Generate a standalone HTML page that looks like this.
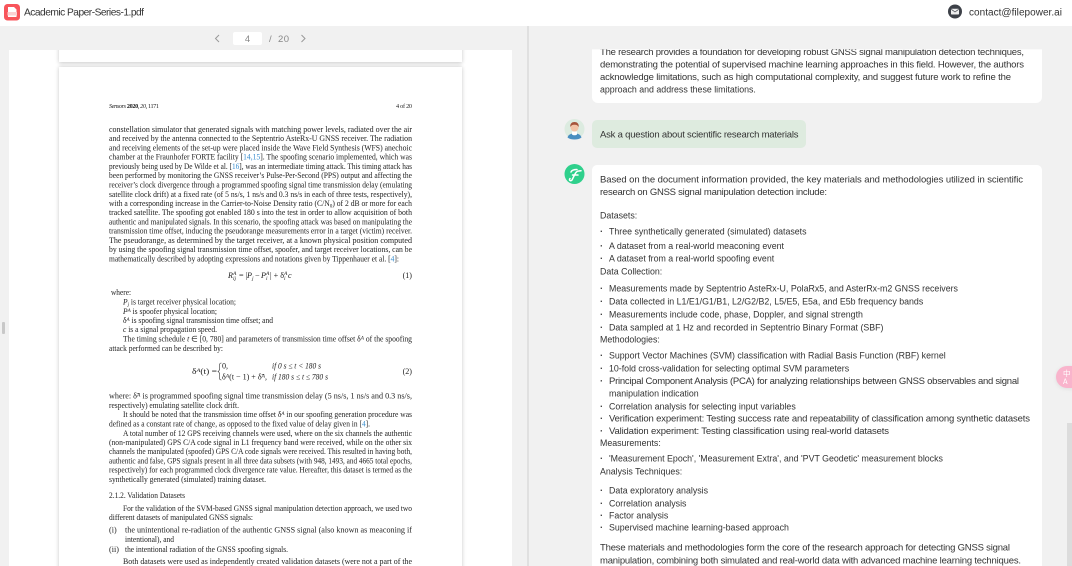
<!DOCTYPE html>
<html><head><meta charset="utf-8"><style>
html,body{margin:0;padding:0;width:1072px;height:566px;overflow:hidden;background:#f1f1f1}
#w{position:relative;width:1072px;height:566px;overflow:hidden;background:#f1f1f1}
.b{position:absolute}
svg{position:absolute;left:0;top:0}
.p text{font-family:"Liberation Serif",serif;font-size:8.100px;fill:#222}
.p .l{fill:#3a8fd0}
.p .i{font-style:italic}
.p .s{font-size:5.500px}
.c text{font-family:"Liberation Sans",sans-serif;font-size:9.500px;fill:#333}
.c .d{font-weight:bold;fill:#444}
</style></head><body><div id="w">
<div class="b" style="left:0;top:0;width:1072px;height:26px;background:#fff"></div>
<div class="b" style="left:9px;top:50px;width:503px;height:516px;background:#fff;overflow:hidden">
<div class="b" style="left:50px;top:-20px;width:403px;height:32px;background:#fff;box-shadow:0 1px 4px rgba(0,0,0,.22)"></div>
<div class="b" style="left:50px;top:17px;width:403px;height:520px;background:#fff;box-shadow:0 0 4px rgba(0,0,0,.22)"></div>
</div>
<div class="b" style="left:527px;top:26px;width:2px;height:540px;background:#e0e0e0"></div>
<div class="b" style="left:2px;top:322px;width:3px;height:12px;background:#c8c8c8;border-radius:1px"></div>
<div class="b" style="left:233px;top:32px;width:29px;height:13px;background:#fff;border-radius:2px"></div>
<div class="b" style="left:592px;top:49px;width:450px;height:54px;background:#fff;border-radius:0 0 6px 6px"></div>
<div class="b" style="left:592px;top:120px;width:214px;height:28px;background:#deebdf;border-radius:5px"></div>
<div class="b" style="left:592px;top:165px;width:450px;height:410px;background:#fff;border-radius:5px"></div>
<div class="b" style="left:1067px;top:423px;width:5px;height:143px;background:#dcdcdc"></div>
<div class="b" style="left:1056px;top:366px;width:30px;height:22px;background:#f9b4cc;border-radius:11px;box-shadow:0 1px 4px rgba(0,0,0,.08)"></div>

<svg width="1072" height="566" viewBox="0 0 1072 566">
<!-- PDF icon -->
<rect x="4" y="4" width="16" height="16.500" rx="3.500" fill="#f8555b"/>
<path d="M8 7h6l2.500 2.500V12H8z" fill="#fff"/><rect x="7.500" y="12" width="9.500" height="3.500" fill="#fbd0d2"/><path d="M8 15.500h8.500V17H8z" fill="#fff"/>
<text x="24" y="15.700" font-family="Liberation Sans,sans-serif" font-size="10.200" fill="#333" textLength="120">Academic Paper-Series-1.pdf</text>
<!-- mail -->
<circle cx="955" cy="11.500" r="7" fill="#3d4148"/>
<rect x="951" y="8.700" width="8" height="5.800" rx=".8" fill="#eee"/><path d="M951.300 9.300l3.700 2.700 3.700-2.700" fill="none" stroke="#3d4148" stroke-width=".7"/>
<text x="969" y="15.500" font-family="Liberation Sans,sans-serif" font-size="10" fill="#333" textLength="93">contact@filepower.ai</text>
<!-- pager -->
<path d="M219 35l-3.500 3.500 3.500 3.500" fill="none" stroke="#999" stroke-width="1"/>
<path d="M301.500 35l3.500 3.500-3.500 3.500" fill="none" stroke="#999" stroke-width="1"/>
<g font-family="Liberation Sans,sans-serif" font-size="9.500" fill="#888">
<text x="247.500" y="42" text-anchor="middle">4</text>
<text x="269" y="42">/</text>
<text x="278" y="42" textLength="11">20</text>
</g>
<!-- avatars -->
<circle cx="574.500" cy="129" r="10" fill="#dcebe0"/>
<path d="M567.500 137.500c1-3.500 4-4 7-4s6 .5 7 4c-2 1.500-4.500 2-7 2s-5-.5-7-2z" fill="#4a8fc0"/>
<path d="M572 131.500h5v3c-1.500 1-3.500 1-5 0z" fill="#fff"/>
<circle cx="574.500" cy="127.500" r="4" fill="#f2c3a6"/>
<path d="M570.300 127c-.4-3.500 1.700-5 4.200-5s4.600 1.500 4.200 5c-1-1.600-2-2.300-4.200-2.300s-3.200.7-4.200 2.300z" fill="#a5533a"/>
<circle cx="574.500" cy="174" r="10" fill="#2fd08c"/>
<path d="M570 178.500c-1.500 1.500 .5 3 2 1.500l3-6c.8-1.600 2-3 3.800-3l2.200-.3M572.500 175h5.500M571 172c1-2.500 4-2.500 6-2.500" fill="none" stroke="#fff" stroke-width="1.500" stroke-linecap="round"/>
<g fill="#fff" font-family="Noto Sans CJK SC,sans-serif" font-size="7.500"><text x="1063" y="376">中</text><text x="1063" y="384">A</text></g>

<!-- chat -->
<g class="c" style="filter:blur(.25px)">
<text x="600" y="55" textLength="424">The research provides a foundation for developing robust GNSS signal manipulation detection techniques,</text>
<text x="600" y="67.500" textLength="424">demonstrating the potential of supervised machine learning approaches in this field. However, the authors</text>
<text x="600" y="80" textLength="411">acknowledge limitations, such as high computational complexity, and suggest future work to refine the</text>
<text x="600" y="137.500" textLength="198.500">Ask a question about scientific research materials</text>
<text x="600" y="182.500" textLength="423">Based on the document information provided, the key materials and methodologies utilized in scientific</text>
<text x="600" y="195" textLength="227">research on GNSS signal manipulation detection include:</text>
<text x="609" y="384" textLength="410">Principal Component Analysis (PCA) for analyzing relationships between GNSS observables and signal</text>
<text x="609" y="421.500" textLength="421">Verification experiment: Testing success rate and repeatability of classification among synthetic datasets</text>
<text x="609" y="434" textLength="280">Validation experiment: Testing classification using real-world datasets</text>
<text x="600" y="550.500" textLength="410">These materials and methodologies form the core of the research approach for detecting GNSS signal</text>
<text x="600" y="563.500" textLength="421">manipulation, combining both simulated and real-world data with advanced machine learning techniques.</text>
<g>
<text class="d" x="600" y="234.500">·</text><text class="d" x="600" y="249">·</text><text class="d" x="600" y="261.500">·</text>
<text class="d" x="600" y="291.500">·</text><text class="d" x="600" y="304.500">·</text><text class="d" x="600" y="317.500">·</text><text class="d" x="600" y="330.500">·</text>
<text class="d" x="600" y="358.500">·</text><text class="d" x="600" y="371.500">·</text><text class="d" x="600" y="384">·</text><text class="d" x="600" y="409.500">·</text><text class="d" x="600" y="421.500">·</text><text class="d" x="600" y="434">·</text>
<text class="d" x="600" y="461.500">·</text><text class="d" x="600" y="493.500">·</text><text class="d" x="600" y="506.500">·</text><text class="d" x="600" y="518.500">·</text><text class="d" x="600" y="530.500">·</text>
</g>
<g transform="translate(600 0) scale(.93 1) translate(-600 0)">
<text x="600" y="92.500">approach and address these limitations.</text>
<text x="600" y="218.500">Datasets:</text>
<text x="600" y="274.500">Data Collection:</text>
<text x="600" y="342.500">Methodologies:</text>
<text x="600" y="446">Measurements:</text>
<text x="600" y="474.500">Analysis Techniques:</text>
</g>
<g transform="translate(609 0) scale(.93 1) translate(-609 0)">
<text x="609" y="234.500">Three synthetically generated (simulated) datasets</text>
<text x="609" y="249">A dataset from a real-world meaconing event</text>
<text x="609" y="261.500">A dataset from a real-world spoofing event</text>
<text x="609" y="291.500">Measurements made by Septentrio AsteRx-U, PolaRx5, and AsterRx-m2 GNSS receivers</text>
<text x="609" y="304.500">Data collected in L1/E1/G1/B1, L2/G2/B2, L5/E5, E5a, and E5b frequency bands</text>
<text x="609" y="317.500">Measurements include code, phase, Doppler, and signal strength</text>
<text x="609" y="330.500">Data sampled at 1 Hz and recorded in Septentrio Binary Format (SBF)</text>
<text x="609" y="358.500">Support Vector Machines (SVM) classification with Radial Basis Function (RBF) kernel</text>
<text x="609" y="371.500">10-fold cross-validation for selecting optimal SVM parameters</text>
<text x="609" y="396.500">manipulation indication</text>
<text x="609" y="409.500">Correlation analysis for selecting input variables</text>
<text x="609" y="461.500">'Measurement Epoch', 'Measurement Extra', and 'PVT Geodetic' measurement blocks</text>
<text x="609" y="493.500">Data exploratory analysis</text>
<text x="609" y="506.500">Correlation analysis</text>
<text x="609" y="518.500">Factor analysis</text>
<text x="609" y="530.500">Supervised machine learning-based approach</text>
</g>
</g>
<rect x="592" y="26" width="450" height="23.300" fill="#f1f1f1"/>

<!-- pdf -->
<g class="p" style="filter:blur(.3px)">
<text x="109" y="108" style="font-size:6.200px" textLength="50"><tspan class="i">Sensors</tspan> <tspan font-weight="bold">2020</tspan>, <tspan class="i">20</tspan>, 1171</text>
<text x="396" y="108" style="font-size:6.200px" textLength="16">4 of 20</text>
<text x="109" y="131.800" textLength="303" lengthAdjust="spacingAndGlyphs">constellation simulator that generated signals with matching power levels, radiated over the air</text>
<text x="109" y="141.200" textLength="303" lengthAdjust="spacingAndGlyphs">and received by the antenna connected to the Septentrio AsteRx-U GNSS receiver. The radiation</text>
<text x="109" y="150.500" textLength="303" lengthAdjust="spacingAndGlyphs">and receiving elements of the set-up were placed inside the Wave Field Synthesis (WFS) anechoic</text>
<text x="109" y="159.500" textLength="303" lengthAdjust="spacingAndGlyphs">chamber at the Fraunhofer FORTE facility [<tspan class="l">14,15</tspan>]. The spoofing scenario implemented, which was</text>
<text x="109" y="168.800" textLength="303" lengthAdjust="spacingAndGlyphs">previously being used by De Wilde et al. [<tspan class="l">16</tspan>], was an intermediate timing attack. This timing attack has</text>
<text x="109" y="178.200" textLength="303" lengthAdjust="spacingAndGlyphs">been performed by monitoring the GNSS receiver’s Pulse-Per-Second (PPS) output and affecting the</text>
<text x="109" y="187.500" textLength="303" lengthAdjust="spacingAndGlyphs">receiver’s clock divergence through a programmed spoofing signal time transmission delay (emulating</text>
<text x="109" y="196.800" textLength="303" lengthAdjust="spacingAndGlyphs">satellite clock drift) at a fixed rate (of 5 ns/s, 1 ns/s and 0.3 ns/s in each of three tests, respectively),</text>
<text x="109" y="205.800" textLength="303" lengthAdjust="spacingAndGlyphs">with a corresponding increase in the Carrier-to-Noise Density ratio (C/N<tspan class="s" dy="1.500">0</tspan><tspan dy="-1.500">) of 2 dB or more for each</tspan></text>
<text x="109" y="215.200" textLength="303" lengthAdjust="spacingAndGlyphs">tracked satellite. The spoofing got enabled 180 s into the test in order to allow acquisition of both</text>
<text x="109" y="224.500" textLength="303" lengthAdjust="spacingAndGlyphs">authentic and manipulated signals. In this scenario, the spoofing attack was based on manipulating the</text>
<text x="109" y="233.500" textLength="303" lengthAdjust="spacingAndGlyphs">transmission time offset, inducing the pseudorange measurements error in a target (victim) receiver.</text>
<text x="109" y="242.800" textLength="303" lengthAdjust="spacingAndGlyphs">The pseudorange, as determined by the target receiver, at a known physical position computed</text>
<text x="109" y="252.200" textLength="303" lengthAdjust="spacingAndGlyphs">by using the spoofing signal transmission time offset, spoofer, and target receiver locations, can be</text>
<text x="109" y="261.500" textLength="290" lengthAdjust="spacingAndGlyphs">mathematically described by adopting expressions and notations given by Tippenhauer et al. [<tspan class="l">4</tspan>]:</text>
<text x="228" y="278.200" class="i">R</text><text x="233" y="275" class="s i">A</text><text x="233" y="280" class="s i">ij</text><text x="239" y="278.200">= |</text><text x="247" y="278.200" class="i">P</text><text x="252" y="280" class="s i">j</text><text x="255" y="278.200">− </text><text x="261" y="278.200" class="i">P</text><text x="266" y="275" class="s i">A</text><text x="266" y="280" class="s i">i</text><text x="270" y="278.200">| + δ</text><text x="284" y="275" class="s i">A</text><text x="284" y="280" class="s i">i</text><text x="288" y="278.200" class="i">c</text>
<text x="412" y="278.200" text-anchor="end">(1)</text>
<text x="111" y="295.200" textLength="20" lengthAdjust="spacingAndGlyphs">where:</text>
<text x="123" y="304.500" textLength="113" lengthAdjust="spacingAndGlyphs"><tspan class="i">P</tspan><tspan class="s i" dy="1.500">j</tspan><tspan dy="-1.500"> is target receiver physical location;</tspan></text>
<text x="123" y="313.800" textLength="94" lengthAdjust="spacingAndGlyphs"><tspan class="i">P</tspan><tspan class="s i" dy="-2">A</tspan><tspan dy="2"> is spoofer physical location;</tspan></text>
<text x="123" y="322.800" textLength="150" lengthAdjust="spacingAndGlyphs">δ<tspan class="s i" dy="-2">A</tspan><tspan dy="2"> is spoofing signal transmission time offset; and</tspan></text>
<text x="123" y="332.200" textLength="94" lengthAdjust="spacingAndGlyphs"><tspan class="i">c</tspan> is a signal propagation speed.</text>
<text x="123" y="341.500" textLength="289" lengthAdjust="spacingAndGlyphs">The timing schedule <tspan class="i">t</tspan> ∈ [0, 780] and parameters of transmission time offset δ<tspan class="s i" dy="-2">A</tspan><tspan dy="2"> of the spoofing</tspan></text>
<text x="109" y="350.800" textLength="114" lengthAdjust="spacingAndGlyphs">attack performed can be described by:</text>
<text x="192" y="374" textLength="25" lengthAdjust="spacingAndGlyphs">δ<tspan class="s i" dy="-2">A</tspan><tspan dy="2">(t) =</tspan></text>
<path d="M221.500 363c-1.500 0-2 .5-2 2v4c0 1.500-.5 2-1.500 2.500 1 .5 1.500 1 1.500 2.500v4c0 1.500.5 2 2 2" fill="none" stroke="#333" stroke-width=".6"/>
<text x="222" y="368.500">0,</text>
<text x="272" y="368.500" class="i" textLength="49" lengthAdjust="spacingAndGlyphs">if 0 s ≤ t &lt; 180 s</text>
<text x="222" y="379.500" textLength="45" lengthAdjust="spacingAndGlyphs">δ<tspan class="s i" dy="-2">A</tspan><tspan dy="2">(t − 1) + δ̃</tspan><tspan class="s i" dy="-2">A</tspan><tspan dy="2">,</tspan></text>
<text x="272" y="379.500" class="i" textLength="56" lengthAdjust="spacingAndGlyphs">if 180 s ≤ t ≤ 780 s</text>
<text x="412" y="374.200" text-anchor="end">(2)</text>
<text x="109" y="398.500" textLength="303" lengthAdjust="spacingAndGlyphs">where: δ̃<tspan class="s i" dy="-2">A</tspan><tspan dy="2"> is programmed spoofing signal time transmission delay (5 ns/s, 1 ns/s and 0.3 ns/s,</tspan></text>
<text x="109" y="407.800" textLength="130" lengthAdjust="spacingAndGlyphs">respectively) emulating satellite clock drift.</text>
<text x="123" y="417.200" textLength="289" lengthAdjust="spacingAndGlyphs">It should be noted that the transmission time offset δ<tspan class="s i" dy="-2">A</tspan><tspan dy="2"> in our spoofing generation procedure was</tspan></text>
<text x="109" y="426.500" textLength="261" lengthAdjust="spacingAndGlyphs">defined as a constant rate of change, as opposed to the fixed value of delay given in [<tspan class="l">4</tspan>].</text>
<text x="123" y="435.800" textLength="289" lengthAdjust="spacingAndGlyphs">A total number of 12 GPS receiving channels were used, where on the six channels the authentic</text>
<text x="109" y="444.800" textLength="303" lengthAdjust="spacingAndGlyphs">(non-manipulated) GPS C/A code signal in L1 frequency band were received, while on the other six</text>
<text x="109" y="454.200" textLength="303" lengthAdjust="spacingAndGlyphs">channels the manipulated (spoofed) GPS C/A code signals were received. This resulted in having both,</text>
<text x="109" y="463.500" textLength="303" lengthAdjust="spacingAndGlyphs">authentic and false, GPS signals present in all three data subsets (with 948, 1493, and 4665 total epochs,</text>
<text x="109" y="472.500" textLength="303" lengthAdjust="spacingAndGlyphs">respectively) for each programmed clock divergence rate value. Hereafter, this dataset is termed as the</text>
<text x="109" y="481.800" textLength="157" lengthAdjust="spacingAndGlyphs">synthetically generated (simulated) training dataset.</text>
<text x="109" y="497.800" textLength="76" lengthAdjust="spacingAndGlyphs">2.1.2. Validation Datasets</text>
<text x="123" y="510.800" textLength="289" lengthAdjust="spacingAndGlyphs">For the validation of the SVM-based GNSS signal manipulation detection approach, we used two</text>
<text x="109" y="520.200" textLength="144" lengthAdjust="spacingAndGlyphs">different datasets of manipulated GNSS signals:</text>
<text x="109" y="532.500">(i)</text><text x="125" y="532.500" textLength="287" lengthAdjust="spacingAndGlyphs">the unintentional re-radiation of the authentic GNSS signal (also known as meaconing if</text>
<text x="125" y="541.800" textLength="49" lengthAdjust="spacingAndGlyphs">intentional), and</text>
<text x="109" y="551.800">(ii)</text><text x="125" y="551.800" textLength="163" lengthAdjust="spacingAndGlyphs">the intentional radiation of the GNSS spoofing signals.</text>
<text x="123" y="564.200" textLength="289" lengthAdjust="spacingAndGlyphs">Both datasets were used as independently created validation datasets (were not a part of the</text>
</g>
</svg>
</div></body></html>
